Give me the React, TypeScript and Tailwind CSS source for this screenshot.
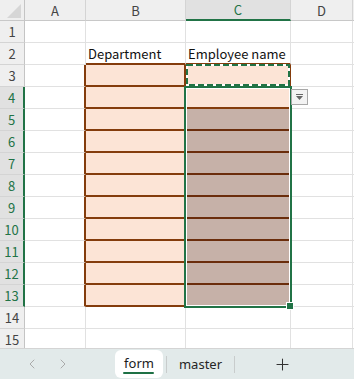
import React from "react";
import { ChevronLeft, ChevronRight, Plus } from "lucide-react";

const COLS = ["A", "B", "C", "D", ""];
const ROWS = Array.from({ length: 15 }, (_, i) => i + 1);

function colHeaderClass(c: number): string {
  if (c === 2)
    return "bg-[#e1e1e1] text-[#217346] border-r border-r-[#d4d4d4] border-b-2 border-b-[#217346]";
  return "bg-[#efefef] text-[#444444] border-r border-r-[#d4d4d4] border-b border-b-[#c8c8c8]";
}

function rowHeaderClass(r: number): string {
  if (r >= 4 && r <= 13)
    return "bg-[#e1e1e1] text-[#217346] border-b border-b-[#d4d4d4] border-r-2 border-r-[#217346]";
  return "bg-[#efefef] text-[#444444] border-b border-b-[#d4d4d4] border-r border-r-[#c4c4c4]";
}

function cellClass(r: number, c: number): string {
  const inBlock = r >= 3 && r <= 13;
  if (c === 0) {
    if (inBlock) return "bg-white border-b border-b-[#e1e1e1] border-r-2 border-r-[#843c0c]";
    return "bg-white border-b border-r border-[#e1e1e1]";
  }
  if (c === 1) {
    if (r === 2) return "bg-white border-r border-r-[#e1e1e1] border-b-2 border-b-[#843c0c]";
    if (inBlock) return "bg-[#fce4d6] border-r-2 border-b-2 border-[#843c0c]";
    return "bg-white border-b border-r border-[#e1e1e1]";
  }
  if (c === 2) {
    if (r === 2) return "bg-white border-r border-r-[#e1e1e1] border-b-2 border-b-[#843c0c]";
    if (r === 3 || r === 4) return "bg-[#fce4d6] border-r-2 border-b-2 border-[#843c0c]";
    if (inBlock) return "bg-[#c6b1a8] border-r-2 border-b-2 border-[#6b2d0c]";
    return "bg-white border-b border-r border-[#e1e1e1]";
  }
  return "bg-white border-b border-r border-[#e1e1e1]";
}

function cellText(r: number, c: number): string {
  if (r === 2 && c === 1) return "Department";
  if (r === 2 && c === 2) return "Employee name";
  return "";
}

export default function App() {
  return (
    <div
      className="w-[354px] h-[379px] overflow-hidden bg-white flex flex-col"
      style={{ fontFamily: '"Noto Sans CJK JP", "Noto Sans", sans-serif' }}
    >
      <div className="relative h-[348px] overflow-hidden shrink-0">
        <div className="grid grid-cols-[25px_61px_100px_105px_62px_1fr] grid-rows-[21px_repeat(15,22px)]">
          {/* corner */}
          <div className="bg-[#efefef] border-r border-r-[#c4c4c4] border-b border-b-[#c8c8c8] flex items-end justify-end pr-[3px] pb-[2px]">
            <svg width="14" height="14" viewBox="0 0 14 14">
              <polygon points="14,0 14,14 0,14" fill="#d6d6d6" />
            </svg>
          </div>
          {COLS.map((l, c) => (
            <div
              key={"h" + c}
              className={"flex items-center justify-center text-[13px] leading-none " + colHeaderClass(c)}
            >
              {l}
            </div>
          ))}
          {ROWS.map((r) => (
            <React.Fragment key={"r" + r}>
              <div className={"flex items-center justify-center text-[13px] leading-none " + rowHeaderClass(r)}>
                {r}
              </div>
              {COLS.map((_, c) => (
                <div
                  key={r + "-" + c}
                  className={"flex items-center pl-[2px] text-[13px] leading-none text-[#111111] whitespace-nowrap " + cellClass(r, c)}
                >
                  {cellText(r, c)}
                </div>
              ))}
            </React.Fragment>
          ))}
        </div>

        {/* marching ants around C3 */}
        <svg className="absolute left-[186px] top-[64px]" width="104" height="22" viewBox="0 0 104 22">
          <rect x="1" y="1" width="102" height="20" fill="none" stroke="#ffffff" strokeWidth="2" />
          <rect x="1" y="1" width="102" height="20" fill="none" stroke="#217346" strokeWidth="2" strokeDasharray="6 3" />
        </svg>

        {/* selection C4:C13 */}
        <div className="absolute left-[184px] top-[86px] w-[108px] h-[222px] border-2 border-[#217346]">
          <div className="w-full h-full border border-white" />
        </div>

        {/* fill handle */}
        <div className="absolute left-[286px] top-[302px] w-[8px] h-[8px] bg-[#217346] border border-white" />

        {/* dropdown button */}
        <div className="absolute left-[291px] top-[89px] w-[17px] h-[16px] bg-[#f3f3f3] border border-[#a8a8a8] flex flex-col items-center justify-center gap-[1px]">
          <div className="w-[7px] h-px bg-[#666666]" />
          <svg width="7" height="4" viewBox="0 0 7 4">
            <polygon points="0,0 7,0 3.5,4" fill="#666666" />
          </svg>
        </div>
      </div>

      {/* sheet tab bar */}
      <div
        className="h-[31px] bg-[#e2eaea] border-t border-t-[#d4d4d4] flex items-center"
        style={{ fontFamily: '"Noto Sans", sans-serif' }}
      >
        <div className="w-[24px] shrink-0" />
        <div className="w-[16px] flex justify-center text-[#a6a6a6]">
          <ChevronLeft size={20} strokeWidth={1.4} />
        </div>
        <div className="w-[15px] shrink-0" />
        <div className="w-[16px] flex justify-center text-[#a6a6a6]">
          <ChevronRight size={20} strokeWidth={1.4} />
        </div>
        <div className="w-[44px] shrink-0" />
        <div className="w-[48px] h-[28px] bg-white rounded-[6px] flex flex-col items-center justify-center relative">
          <span className="text-[13px] leading-none text-[#1a1a1a] -mt-[2px]">form</span>
          <div className="absolute bottom-[4px] left-[8px] w-[31px] h-[2px] bg-[#1e7145] rounded-full" />
        </div>
        <div className="w-[3px] shrink-0" />
        <div className="w-px h-[17px] bg-[#c8cccc]" />
        <div className="w-[67px] flex justify-center text-[13px] leading-none text-[#262626]">master</div>
        <div className="w-px h-[17px] bg-[#c8cccc]" />
        <div className="w-[94px] flex justify-center text-[#333333]">
          <Plus size={19} strokeWidth={1.3} />
        </div>
      </div>
    </div>
  );
}
